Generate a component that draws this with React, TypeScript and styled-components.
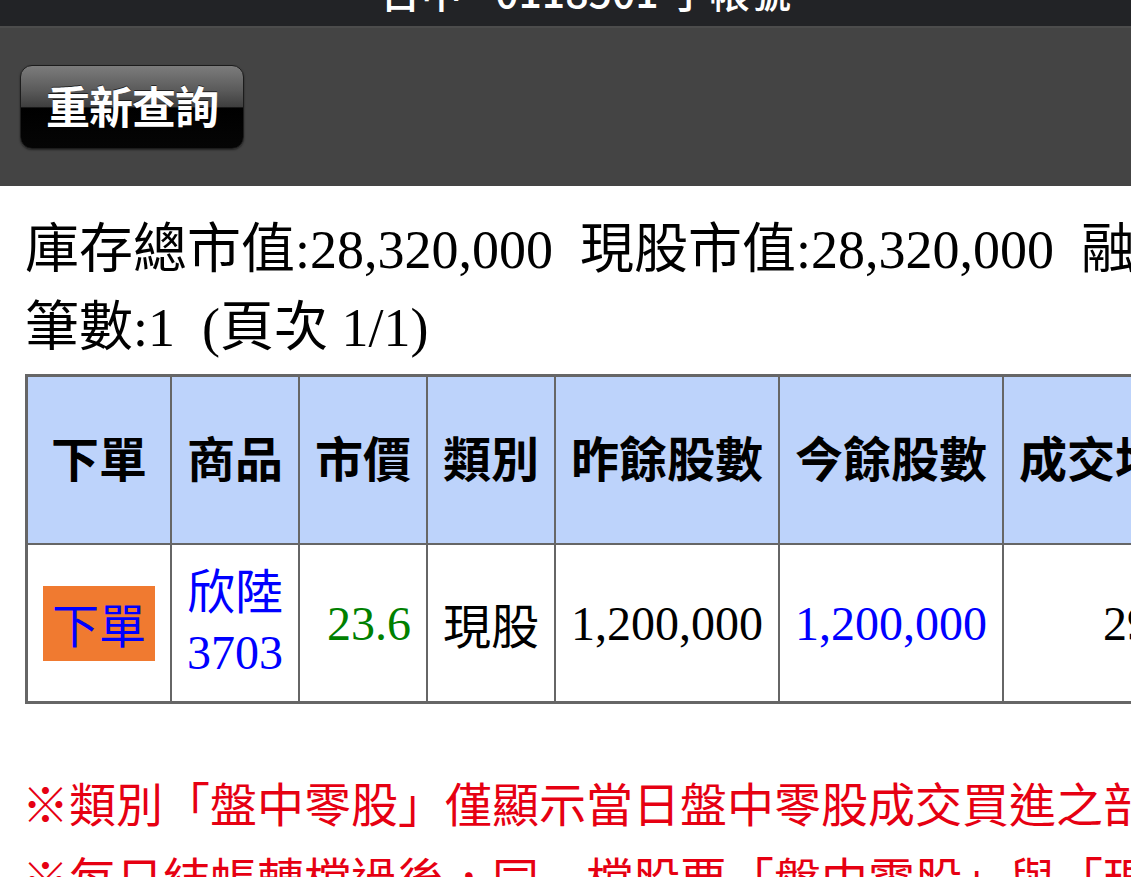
import styled, { createGlobalStyle } from 'styled-components'

const GlobalStyle = createGlobalStyle`
    html, body {
        margin: 0;
        padding: 0;
        overflow: hidden;
        background: #ffffff;
    }
    body {
        font-family: 'Liberation Serif', 'Noto Sans CJK TC', serif;
    }
`

const SANS = `'Noto Sans CJK TC', 'Noto Sans', sans-serif`
const MIXED = `'Liberation Serif', 'Noto Sans CJK TC', serif`

type Column = { title: string }

const columns: Column[] = [
    { title: '下單' },
    { title: '商品' },
    { title: '市價' },
    { title: '類別' },
    { title: '昨餘股數' },
    { title: '今餘股數' },
    { title: '成交均價' },
    { title: '庫存成本' },
]

const App = () => {
    return (
        <>
            <GlobalStyle />
            <Page>
                <TitleBar>
                    <Title>台中 - 0118501 子帳號</Title>
                </TitleBar>
                <Toolbar>
                    <GlossButton>重新查詢</GlossButton>
                </Toolbar>
                <Content>
                    <Summary>
                        <Line>
                            庫存總市值:28,320,000&nbsp;&nbsp;現股市值:28,320,000&nbsp;&nbsp;融資市值:0&nbsp;&nbsp;融券市值:0
                        </Line>
                        <Line>筆數:1&nbsp;&nbsp;(頁次 1/1)</Line>
                    </Summary>
                    <Grid>
                        <thead>
                            <tr>
                                {columns.map(c => (
                                    <HeadCell key={c.title}>{c.title}</HeadCell>
                                ))}
                            </tr>
                        </thead>
                        <tbody>
                            <tr>
                                <Cell $align='center'>
                                    <OrderTag>下單</OrderTag>
                                </Cell>
                                <Cell $color='#0000ff'>
                                    <Stacked>
                                        <span>欣陸</span>
                                        <span>3703</span>
                                    </Stacked>
                                </Cell>
                                <Cell $align='right' $color='#008000'>23.6</Cell>
                                <Cell>現股</Cell>
                                <Cell $align='right'>1,200,000</Cell>
                                <Cell $align='right' $color='#0000ff'>1,200,000</Cell>
                                <Cell $align='right'>29.60</Cell>
                                <Cell $align='right'>35,520,000</Cell>
                            </tr>
                        </tbody>
                    </Grid>
                    <Notes>
                        <Note>※類別「盤中零股」僅顯示當日盤中零股成交買進之部位</Note>
                        <Note>※每日結帳轉檔過後，同一檔股票「盤中零股」與「現股」部位將合併</Note>
                    </Notes>
                </Content>
            </Page>
        </>
    )
}

export default App

const Page = styled.div`
    width: 100%;
    height: 877px;
    overflow: hidden;
`

const TitleBar = styled.div`
    height: 26px;
    background-color: #222326;
    overflow: hidden;
    display: flex;
    justify-content: center;
`

const Title = styled.div`
    margin-top: -30px;
    padding-left: 40px;
    font-family: ${SANS};
    font-weight: 500;
    font-size: 41px;
    line-height: 40px;
    color: #ffffff;
    white-space: nowrap;
`

const Toolbar = styled.div`
    height: 160px;
    box-sizing: border-box;
    padding: 37px 0 0 20px;
    background-color: #444444;
    border-top: 2px solid #4c4c4c;
`

const GlossButton = styled.button`
    width: 224px;
    height: 84px;
    box-sizing: border-box;
    padding: 0 0 4px;
    border: 1px solid #1c1c1c;
    border-radius: 12px;
    background: linear-gradient(
        to bottom,
        #7c7c7c 0%,
        #5a5a5a 30%,
        #3e3e3e 50%,
        #000000 51%,
        #050505 100%
    );
    box-shadow: 0 1px 2px rgba(0, 0, 0, 0.5);
    color: #ffffff;
    font-family: ${SANS};
    font-weight: 700;
    font-size: 44px;
    letter-spacing: -1px;
    text-shadow: 0 -1px 0 rgba(0, 0, 0, 0.6);
    cursor: pointer;
`

const Content = styled.div`
    padding: 25px 0 0 25px;
`

const Summary = styled.div`
    font-family: ${MIXED};
    font-size: 54px;
    line-height: 78px;
    color: #000000;
    white-space: nowrap;
`

const Line = styled.div``

const Grid = styled.table`
    margin-top: 7px;
    border-collapse: collapse;
    border: 3px solid #666666;
    white-space: nowrap;
`

const HeadCell = styled.th`
    height: 158px;
    padding: 0 15px 8px;
    background-color: #bdd3fb;
    border: 2px solid #666666;
    font-family: ${SANS};
    font-weight: 700;
    font-size: 48px;
    color: #000000;
    text-align: center;
    vertical-align: middle;
`

const Cell = styled.td<{ $align?: 'left' | 'center' | 'right'; $color?: string }>`
    height: 156px;
    padding: 0 15px;
    border: 2px solid #666666;
    font-family: ${MIXED};
    font-size: 48px;
    color: ${p => p.$color ?? '#000000'};
    text-align: ${p => p.$align ?? 'left'};
    vertical-align: middle;
`

const OrderTag = styled.span`
    display: inline-block;
    padding: 8px 9px 10px;
    background-color: #f07a30;
    color: #0000ff;
    font-family: ${SANS};
    font-size: 47px;
    line-height: 57px;
`

const Stacked = styled.div`
    display: flex;
    flex-direction: column;
    line-height: 60px;
`

const Notes = styled.div`
    margin-top: 60px;
    margin-left: -3px;
`

const Note = styled.div`
    font-family: ${SANS};
    font-size: 47px;
    line-height: 75px;
    color: #e60012;
    white-space: nowrap;
`
